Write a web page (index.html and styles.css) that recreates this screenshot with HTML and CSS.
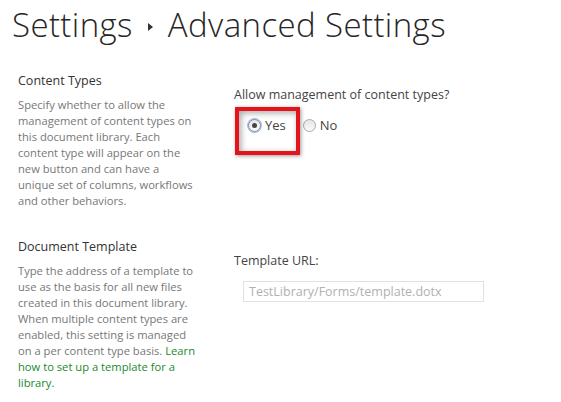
FILE: index.html
```html
<!DOCTYPE html>
<html>
<head>
<meta charset="utf-8">
<link rel="stylesheet" href="styles.css">
</head>
<body>
<h1 class="title"><span>Settings</span><span class="sep"><svg width="5" height="8" viewBox="0 0 5 8"><path d="M0 0 L5 4 L0 8 Z" fill="#333"/></svg></span><span>Advanced Settings</span></h1>
<div class="section s1">
  <div class="info">
    <h3 class="head">Content Types</h3>
    <p class="desc">Specify whether to allow the management of content types on this document library. Each content type will appear on the new button and can have a unique set of columns, workflows and other behaviors.</p>
  </div>
  <div class="field">
    <div class="label">Allow management of content types?</div>
    <div class="radios">
      <label class="opt yes"><span class="radio on focus"><span class="dot"></span></span>Yes<span class="hl"></span></label>
      <label class="opt no"><span class="radio"></span>No</label>
    </div>
  </div>
</div>
<div class="section s2">
  <div class="info">
    <h3 class="head">Document Template</h3>
    <p class="desc">Type the address of a template to use as the basis for all new files created in this document library. When multiple content types are enabled, this setting is managed on a per content type basis. <a class="link">Learn how to set up a template for a library.</a></p>
  </div>
  <div class="field f2">
    <div class="label">Template URL:</div>
    <div class="input">TestLibrary/Forms/template.dotx</div>
  </div>
</div>
</body>
</html>
```
FILE: styles.css
```css
body {
  margin: 0;
  background: #fff;
  font-family: "Open Sans", "Noto Sans", sans-serif;
  color: #444;
}
.title {
  margin: 0;
  padding: 3px 0 0 12px;
  font-weight: 300;
  font-size: 33px;
  line-height: 44px;
  color: #262626;
  display: flex;
  align-items: center;
  letter-spacing: 0.4px;
}
.sep {
  display: flex;
  align-items: center;
  margin: 4px 15px 0 15px;
}
.section {
  display: flex;
}
.s1 { margin-top: 26px; }
.s2 { margin-top: 30px; }
.info {
  width: 180px;
  padding-left: 18px;
  padding-right: 26px;
}
.head {
  margin: 0;
  font-weight: normal;
  font-size: 12.5px;
  line-height: 16px;
  color: #333;
}
.desc {
  margin: 8px 0 0;
  font-size: 11.2px;
  line-height: 16px;
  color: #777;
}
.link { color: #1a8a2a; }
.field {
  padding-left: 10px;
  padding-top: 14px;
}
.label {
  font-size: 12.5px;
  line-height: 16px;
  color: #444;
}
.radios {
  display: flex;
  align-items: center;
  margin-top: 14px;
  padding-left: 14px;
}
.opt {
  display: flex;
  align-items: center;
  font-size: 13px;
  color: #444;
  line-height: 16px;
}
.yes {
  position: relative;
  margin-right: 17px;
}
.hl {
  position: absolute;
  left: -13px;
  top: -10px;
  width: 57px;
  height: 40px;
  border: 4px solid #e4141c;
  box-shadow: inset 2px 2px 6px rgba(0,0,0,0.35), 1px 1px 4px rgba(0,0,0,0.4);
}
.radio {
  width: 11px;
  height: 11px;
  border: 1px solid #aaa;
  border-radius: 50%;
  background: linear-gradient(#e6e6e6, #fafafa);
  margin-right: 4px;
  display: flex;
  align-items: center;
  justify-content: center;
}
.radio.focus {
  box-shadow: 0 0 0 1px #9ec0f0;
  border-color: #888;
}
.dot {
  width: 5px;
  height: 5px;
  border-radius: 50%;
  background: #444;
}
.f2 { padding-top: 14px; }
.input {
  margin: 12px 0 0 9px;
  width: 234px;
  height: 19px;
  border: 1px solid #e1e1e1;
  font-size: 12.5px;
  line-height: 19px;
  color: #b1b1b1;
  padding-left: 5px;
}
```
